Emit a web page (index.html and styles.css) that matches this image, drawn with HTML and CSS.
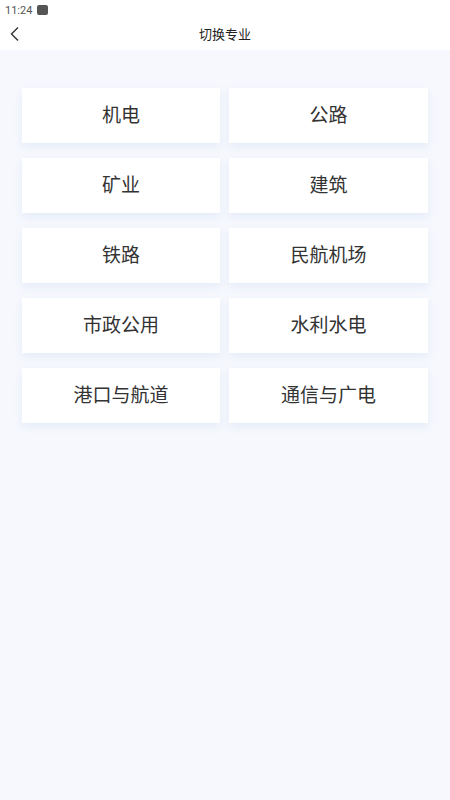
FILE: index.html
```html
<!DOCTYPE html>
<html lang="zh-CN">

<head>
    <meta charset="utf-8">
    <title>切换专业</title>
    <link rel="stylesheet" href="styles.css">
</head>

<body>
    <div class="status-bar">
        <span class="time">11:24</span>
        <span class="status-icon"></span>
    </div>

    <div class="nav-bar">
        <span class="back">
            <svg width="12" height="16" viewBox="0 0 12 16">
                <path d="M9 1.5 L2.5 8 L9 14.5" fill="none" stroke="#333" stroke-width="1.4" />
            </svg>
        </span>
        <span class="nav-title">切换专业</span>
    </div>

    <div class="major-list">
        <div class="major-item">机电</div>
        <div class="major-item">公路</div>
        <div class="major-item">矿业</div>
        <div class="major-item">建筑</div>
        <div class="major-item">铁路</div>
        <div class="major-item">民航机场</div>
        <div class="major-item">市政公用</div>
        <div class="major-item">水利水电</div>
        <div class="major-item">港口与航道</div>
        <div class="major-item">通信与广电</div>
    </div>
</body>

</html>
```

FILE: styles.css
```css
body {
    margin: 0;
    padding: 0;
    font-family: "Noto Sans CJK SC", "Noto Sans", sans-serif;
    background-color: #f6f8fd;
    color: #333;
    min-height: 800px;
}

/* Status bar */
.status-bar {
    height: 20px;
    background-color: #fff;
    display: flex;
    align-items: center;
    padding-left: 5px;
    gap: 5px;
}

.time {
    font-family: Roboto, "Liberation Sans", sans-serif;
    font-size: 11px;
    color: #555;
}

.status-icon {
    width: 11px;
    height: 10px;
    border-radius: 2px;
    background-color: #555;
}

/* Navigation */
.nav-bar {
    height: 30px;
    background-color: #fff;
    display: flex;
    align-items: center;
    justify-content: center;
    position: relative;
}

.back {
    position: absolute;
    left: 9px;
    top: 6px;
    display: flex;
}

.nav-title {
    font-size: 13px;
    color: #222;
    padding-bottom: 4px;
}

/* Major grid */
.major-list {
    display: grid;
    grid-template-columns: 198px 199px;
    column-gap: 9px;
    row-gap: 15px;
    padding: 38px 22px 0;
}

.major-item {
    height: 55px;
    background-color: #fff;
    display: flex;
    align-items: center;
    justify-content: center;
    font-size: 19px;
    color: #333;
    padding-bottom: 4px;
    box-sizing: border-box;
    box-shadow: 0 4px 8px rgba(200, 215, 240, 0.35);
}
```
